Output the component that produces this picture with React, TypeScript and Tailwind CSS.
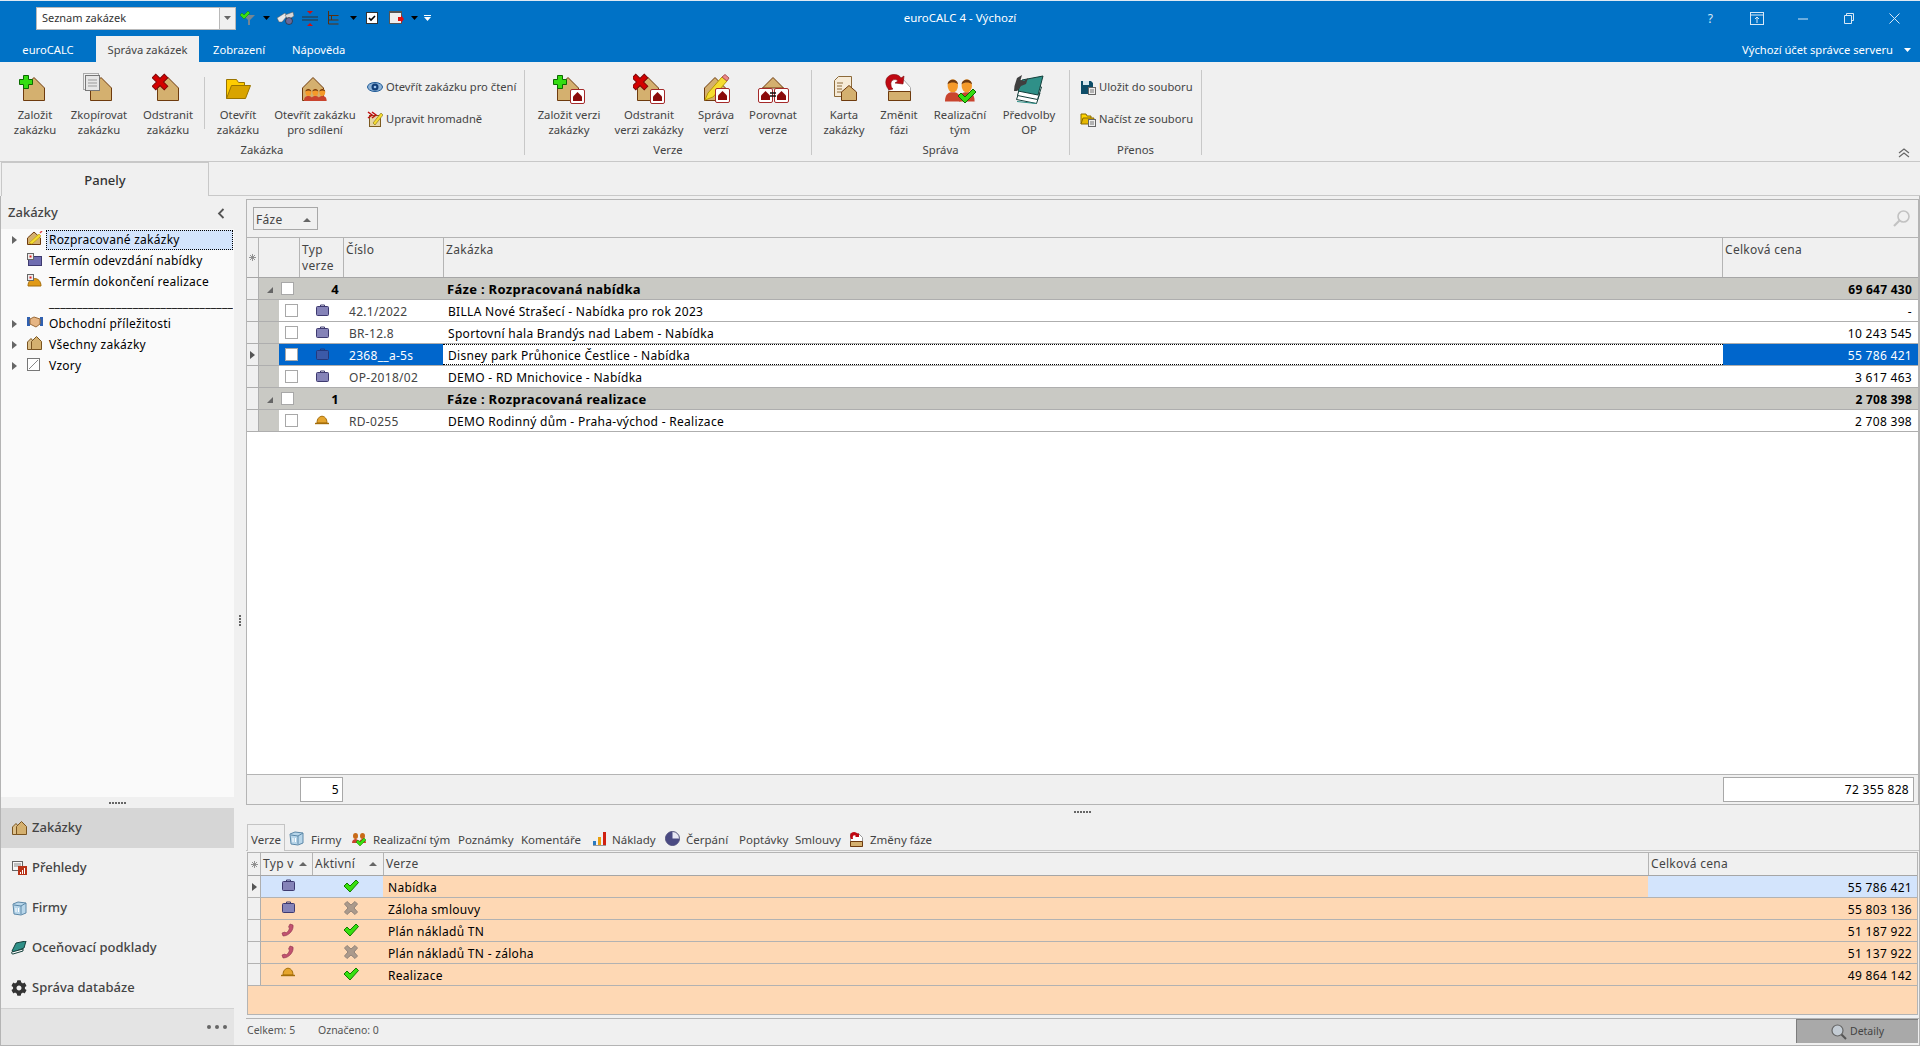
import React from "react";
import { FaCog } from "react-icons/fa";

const House = ({ x = 0, y = 0 }: { x?: number; y?: number }) => (
  <polygon transform={`translate(${x} ${y})`} points="0.5,23.5 0.5,11 11,0.5 21.5,11 21.5,23.5" fill="#d4b06f" stroke="#6e3b0e" />
);
const Plus = ({ x = 0, y = 0 }: { x?: number; y?: number }) => (
  <polygon transform={`translate(${x} ${y})`} points="4.5,0.5 9.5,0.5 9.5,4.5 13.5,4.5 13.5,9.5 9.5,9.5 9.5,13.5 4.5,13.5 4.5,9.5 0.5,9.5 0.5,4.5 4.5,4.5" fill="#35dd12" stroke="#0b6b00" />
);
const Cross = ({ x = 0, y = 0 }: { x?: number; y?: number }) => (
  <polygon transform={`translate(${x} ${y}) rotate(45 7 7)`} points="4.5,-1.5 9.5,-1.5 9.5,4.5 15.5,4.5 15.5,9.5 9.5,9.5 9.5,15.5 4.5,15.5 4.5,9.5 -1.5,9.5 -1.5,4.5 4.5,4.5" fill="#d40000" stroke="#7c0606" />
);
const Badge = ({ x = 0, y = 0 }: { x?: number; y?: number }) => (
  <g transform={`translate(${x} ${y})`}>
    <rect x="0.5" y="0.5" width="14" height="14" rx="1.5" fill="#fff" stroke="#a52a2a" />
    <polygon points="3,12 3,7.5 7.5,3 12,7.5 12,12" fill="#8b0a0a" />
  </g>
);
const Person = ({ x = 0, y = 0, s = 1 }: { x?: number; y?: number; s?: number }) => (
  <g transform={`translate(${x} ${y}) scale(${s})`}>
    <path d="M0 18 C0 12 3 11 6 11 C9 11 12 12 12 18 Z" fill="#c9442e" />
    <ellipse cx="6" cy="6" rx="4" ry="5" fill="#f59a2a" />
    <path d="M2 5 C2 0 10 0 10 5 C8 3 4 3 2 5Z" fill="#6e3a12" />
  </g>
);
const Ico = ({ s = 32, children }: { s?: number; children: React.ReactNode }) => (
  <svg width={s} height={s} viewBox={`0 0 ${s} ${s}`} className="block shrink-0">{children}</svg>
);

const ZalozitIcon = () => <Ico><House x={4} y={4} /><Plus x={0} y={2} /></Ico>;
const KopieIcon = () => (
  <Ico>
    <House x={7} y={4} />
    <rect x="0.5" y="0.5" width="15" height="16" fill="none" stroke="#666" strokeDasharray="1 1" />
    <rect x="2.5" y="2.5" width="14" height="15" fill="#e6e6e6" stroke="#777" />
    <path d="M5 7h9M5 10h9M5 13h9" stroke="#999" />
  </Ico>
);
const OdstranitIcon = () => <Ico><House x={5} y={4} /><Cross x={1} y={2} /></Ico>;
const SlozkaIcon = () => (
  <Ico>
    <path d="M4.5 25.5V6.5h10l2 3h6v4" fill="#ffcc00" stroke="#9a7400" />
    <path d="M4.5 25.5l5-13h19l-5 13z" fill="#d9a400" stroke="#9a7400" />
  </Ico>
);
const SdileniIcon = () => (
  <Ico>
    <House x={3} y={4} />
    <Person x={5} y={15} s={0.72} />
    <Person x={12} y={15} s={0.72} />
    <Person x={19} y={15} s={0.72} />
  </Ico>
);
const VerzePlus = () => <Ico><House x={4} y={4} /><Plus x={0} y={2} /><Badge x={17} y={16} /></Ico>;
const VerzeX = () => <Ico><House x={4} y={4} /><Cross x={0} y={2} /><Badge x={17} y={16} /></Ico>;
const VerzeSprava = () => (
  <Ico>
    <House x={4} y={4} />
    <path d="M5 27 L8 20 L22 4 L27 8 L13 24Z" fill="#f5dc30" stroke="#b89a00" />
    <path d="M22 4 L25 1.5 L29 5 L27 8Z" fill="#e88" stroke="#a55" />
    <Badge x={15} y={15} />
  </Ico>
);
const VerzePorovnat = () => (
  <Ico>
    <polygon points="5.5,15 16,4.5 26.5,15" fill="#d4b06f" stroke="#6e3b0e" />
    <Badge x={1} y={15} />
    <Badge x={17} y={15} />
    <path d="M13 20h6M13 23h6" stroke="#111" strokeWidth="1.5" />
  </Ico>
);
const KartaIcon = () => (
  <Ico>
    <path d="M6.5 7.5l4-4h13v20h-17z" fill="#f6ebd8" stroke="#8c6a3a" />
    <path d="M9 10h6M9 13h5M9 16h5M9 19h5" stroke="#8c6a3a" />
    <polygon points="13.5,27.5 13.5,19 21,12.5 28.5,19 28.5,27.5" fill="#d4b06f" stroke="#6e3b0e" />
  </Ico>
);
const ZmenitIcon = () => (
  <Ico>
    <path d="M5.5 27.5V5.5h14l8 9v13z" fill="#fff" stroke="#aaa" />
    <path d="M5.5 27.5v-9h22v9z" fill="#d4b06f" stroke="#6e3b0e" />
    <path d="M6 17 C0 10 3 2 10 1.5 C14 1 17 3 18 5 L21 3 L20 11 L12 10 L15 8 C12 5 7 7 8 12 C8 14 9 15 10 16Z" fill="#c00812" stroke="#7a0a0a" strokeWidth="0.6" />
  </Ico>
);
const TymIcon = () => (
  <Ico>
    <Person x={1} y={5} s={1.3} />
    <Person x={15} y={5} s={1.3} />
    <path d="M14 23l3-3 4 4 8-8 3 3-11 11z" fill="#35dd12" stroke="#0b6b00" />
  </Ico>
);
const KnihaIcon = () => (
  <Ico>
    <path d="M3.5 26.5L23.5 30.5L27 20L7 16Z" fill="#fff" stroke="#143f3b" />
    <path d="M4 28.5L23 30.5" stroke="#2f9088" />
    <path d="M4.5 22.5L24.5 26.5L28.5 14L8 10Z" fill="#fff" stroke="#143f3b" />
    <path d="M5 18L9 7L30 3L25 22Z" fill="#2f9088" stroke="#143f3b" />
    <path d="M1.5 13 L4 5 L9 2 L7.5 7 L11 8 L15 5 L13 11 L8 13 L4 18 L1 18Z" fill="#3f3f3f" />
  </Ico>
);
const EyeIcon = () => (
  <Ico s={16}>
    <ellipse cx="8" cy="8" rx="7.5" ry="4.5" fill="#8fb4d8" stroke="#1e5a96" />
    <circle cx="8" cy="8" r="3.5" fill="#123f78" />
    <circle cx="8" cy="8" r="1.3" fill="#9fc6ee" />
  </Ico>
);
const HromadneIcon = () => (
  <Ico s={16}>
    <rect x="2.5" y="4.5" width="11" height="11" fill="#e6d6a8" stroke="#7c5a20" />
    <path d="M1 1l4 3-4 3M5 1l4 3-4 3" stroke="#c01010" strokeWidth="1.5" fill="none" />
    <path d="M6 12L14 2l2 2-8 10z" fill="#f5dc30" stroke="#7c6a10" strokeWidth="0.6" />
  </Ico>
);
const UlozitIcon = () => (
  <Ico s={16}>
    <path d="M1 2h10l2 2v11H1z" fill="#0e4d68" />
    <rect x="3" y="2" width="6" height="4" fill="#d8e8ee" />
    <rect x="8.5" y="8.5" width="7" height="7" fill="#eee" stroke="#666" />
    <path d="M10 11h4M10 13h4" stroke="#777" />
  </Ico>
);
const NacistIcon = () => (
  <Ico s={16}>
    <path d="M1 13V3h5l1 2h4v2" fill="#ffd400" stroke="#8a6a00" />
    <path d="M1 13l2-6h11l-2 6z" fill="#e6b800" stroke="#8a6a00" />
    <rect x="8.5" y="8.5" width="7" height="7" fill="#eee" stroke="#666" />
    <path d="M10 11h4M10 13h4" stroke="#777" />
  </Ico>
);
const Caret = ({ c = "#000", className = "" }: { c?: string; className?: string }) => (
  <svg width="7" height="4" viewBox="0 0 7 4" className={`block shrink-0 ${className}`}><polygon points="0,0 7,0 3.5,4" fill={c} /></svg>
);
const CaseI = ({ dark = false }: { dark?: boolean }) => (
  <svg width="13" height="12" viewBox="0 0 13 12" className="block shrink-0">
    <path d="M4.5 3V1h4v2" fill="none" stroke={dark ? "#24397c" : "#3e3a70"} />
    <rect x="0.5" y="2.5" width="12" height="9" rx="1" fill={dark ? "#3c5aa8" : "#8583b8"} stroke={dark ? "#24397c" : "#3e3a70"} />
  </svg>
);
const HatI = () => (
  <svg width="14" height="10" viewBox="0 0 14 10" className="block shrink-0">
    <path d="M2 8 C2 -1 12 -1 12 8Z" fill="#e5a52e" stroke="#a46d0a" />
    <path d="M0 8.5h14" stroke="#a46d0a" strokeWidth="1.4" />
  </svg>
);
const PhoneI = () => (
  <svg width="14" height="14" viewBox="0 0 14 14" className="block shrink-0">
    <path d="M9 1 L12 2 C13 7 8 13 2 13 L1 10 L4 9 L5 10 C7 9 8 7 8.5 5 L7.5 4Z" fill="#c25270" stroke="#8c2f4c" strokeWidth="0.6" />
  </svg>
);
const CheckI = () => (
  <svg width="16" height="14" viewBox="0 0 16 14" className="block shrink-0">
    <path d="M1 7l3-3 3 3 6-6 2.5 2.5L7 13z" fill="#38e010" stroke="#127a00" />
  </svg>
);
const GrayX = () => (
  <svg width="14" height="14" viewBox="0 0 14 14" className="block shrink-0">
    <polygon points="3,0.5 7,4 11,0.5 13.5,3 10,7 13.5,11 11,13.5 7,10 3,13.5 0.5,11 4,7 0.5,3" fill="#ab9a8c" stroke="#93847a" />
  </svg>
);
const DoubleHouse = () => (
  <svg width="15" height="14" viewBox="0 0 15 14" className="block shrink-0">
    <polygon points="0.5,13.5 0.5,6 4,2.5 7,6 7,13.5" fill="#dcc08a" stroke="#7a5420" />
    <polygon points="4.5,13.5 4.5,5.5 9.5,0.5 14.5,5.5 14.5,13.5" fill="#d4b06f" stroke="#7a5420" />
  </svg>
);
const CubeI = () => (
  <svg width="15" height="15" viewBox="0 0 15 15" className="block shrink-0">
    <path d="M1 3l5-2 8 1v10l-5 2-7-1z" fill="#b8d6ea" stroke="#5c88a8" />
    <path d="M2 4l7 1v8M9 5l5-3" fill="none" stroke="#5c88a8" />
    <path d="M4 7v4M6.5 7v4" stroke="#fff" />
  </svg>
);
const BookI = () => (
  <svg width="16" height="15" viewBox="0 0 16 15" className="block shrink-0">
    <path d="M1 10L5 2l10-2-2 7L3 11z" fill="#2f9088" stroke="#143f3b" />
    <path d="M1 11l11-3v2L2 13c-2 0-2-2-1-2z" fill="#fff" stroke="#143f3b" />
  </svg>
);
const ReportI = () => (
  <svg width="15" height="14" viewBox="0 0 15 14" className="block shrink-0">
    <rect x="0.5" y="0.5" width="10" height="9" fill="#f6f6f6" stroke="#666" />
    <path d="M2 3h7M2 5h7" stroke="#888" />
    <rect x="6" y="5" width="9" height="9" fill="#b83216" />
    <path d="M8.5 13v-2M10.5 13V9M12.5 13V7" stroke="#fff" />
  </svg>
);
const PencilHouse = () => (
  <svg width="16" height="14" viewBox="0 0 16 14" className="block shrink-0">
    <polygon points="0.5,13.5 0.5,7 7,1 13.5,7 13.5,13.5" fill="#d4b06f" stroke="#6e3b0e" />
    <path d="M2 12L12 3l2 2-9 8z" fill="#f5dc30" stroke="#b89a00" strokeWidth="0.6" />
    <path d="M13 2l2-2" stroke="#d44" strokeWidth="1.5" />
  </svg>
);
const CaseTree = () => (
  <svg width="15" height="13" viewBox="0 0 15 13" className="block shrink-0">
    <rect x="1.5" y="3.5" width="13" height="9" fill="#6f6db0" stroke="#3e3a70" />
    <rect x="0.5" y="0.5" width="6" height="6" fill="#eee" stroke="#666" />
    <rect x="2.5" y="2.5" width="2" height="2" fill="#d22" />
  </svg>
);
const HatTree = () => (
  <svg width="15" height="13" viewBox="0 0 15 13" className="block shrink-0">
    <path d="M1 12 C1 2 14 2 14 12Z" fill="#e09a18" stroke="#a46d0a" />
    <rect x="0.5" y="0.5" width="6" height="6" fill="#eee" stroke="#666" />
    <rect x="2.5" y="2.5" width="2" height="2" fill="#d22" />
  </svg>
);
const ShakeI = () => (
  <svg width="16" height="12" viewBox="0 0 16 12" className="block shrink-0">
    <rect x="0" y="1" width="3" height="9" fill="#2f60b0" />
    <rect x="13" y="1" width="3" height="9" fill="#2f60b0" />
    <path d="M3 3l4-2 6 2v5l-4 3-6-3z" fill="#e6b583" stroke="#9a6a38" />
  </svg>
);
const EmptyBox = () => (
  <svg width="13" height="13" viewBox="0 0 13 13" className="block shrink-0">
    <rect x="0.5" y="0.5" width="12" height="12" fill="#fff" stroke="#777" />
    <path d="M2 11L11 2" stroke="#888" />
  </svg>
);
const RightTri = ({ c = "#555" }: { c?: string }) => (
  <svg width="5" height="8" viewBox="0 0 5 8" className="block shrink-0"><polygon points="0,0 5,4 0,8" fill={c} /></svg>
);
const UpTri = ({ className = "" }: { className?: string }) => (
  <svg width="8" height="4" viewBox="0 0 8 4" className={`block shrink-0 ${className}`}><polygon points="0,4 8,4 4,0" fill="#666" /></svg>
);
const Star = () => (
  <svg width="7" height="7" viewBox="0 0 7 7" className="block shrink-0">
    <path d="M3.5 0v7M0 3.5h7M1 1l5 5M6 1L1 6" stroke="#888" strokeWidth="0.9" />
  </svg>
);
const Dots = ({ n = 6, v = false, className = "" }: { n?: number; v?: boolean; className?: string }) => (
  <div className={`flex ${v ? "flex-col" : ""} gap-[1px] ${className}`}>
    {Array.from({ length: n }).map((_, i) => <span key={i} className="block w-[2px] h-[2px] bg-[#666]" />)}
  </div>
);

const Big = ({ w, icon, a, b }: { w: string; icon: React.ReactNode; a: string; b: string }) => (
  <div className={`${w} flex flex-col items-center shrink-0`}>
    <div className="h-[32px] mt-[11px] mb-[2px] flex justify-center">{icon}</div>
    <div className="text-center leading-[15px] whitespace-nowrap">{a}<br />{b}</div>
  </div>
);
const Small = ({ icon, t }: { icon: React.ReactNode; t: string }) => (
  <div className="flex items-center gap-[3px] h-[16px] whitespace-nowrap text-[11.2px]">{icon}<span>{t}</span></div>
);
const Group = ({ w, label, children }: { w: string; label: string; children: React.ReactNode }) => (
  <div className={`${w} shrink-0 flex flex-col h-full`}>
    <div className="flex flex-1">{children}</div>
    <div className="text-center leading-[15px] h-[19px]">{label}</div>
  </div>
);
const Sep = () => <div className="w-[1px] h-[85px] mt-[8px] bg-[#c8c8c8] shrink-0" />;

const Check = ({ className = "" }: { className?: string }) => (
  <span className={`block w-[13px] h-[13px] bg-white border border-[#a8a8a8] shrink-0 ${className}`} />
);

const GroupRow = ({ n, t, p }: { n: string; t: string; p: string }) => (
  <div className="flex h-[22px] border-b border-[#aeaeae]">
    <div className="w-[12px] bg-[#f0f0f0] border-r border-[#aeaeae] shrink-0" />
    <div className="flex flex-1 items-center bg-[#c9c9c4] font-bold text-black">
      <div className="w-[22px] flex justify-center shrink-0">
        <svg width="6" height="6" viewBox="0 0 6 6" className="block mt-[3px]"><polygon points="0,6 6,6 6,0" fill="#666" /></svg>
      </div>
      <Check />
      <div className="w-[47px] text-right pr-[2px] pt-[2px] shrink-0 text-[13px]">{n}</div>
      <div className="pl-[106px] pt-[2px] flex-1 text-[13px] tracking-[0.3px]">{t}</div>
      <div className="pr-[6px] pt-[2px] tracking-[0.25px]">{p}</div>
    </div>
  </div>
);
const DataRow = ({ no, t, p, sel = false, hat = false }: { no: string; t: string; p: string; sel?: boolean; hat?: boolean }) => (
  <div className="flex h-[22px] border-b border-[#aeaeae]">
    <div className="w-[12px] bg-[#f0f0f0] border-r border-[#aeaeae] shrink-0 flex items-center justify-center">
      {sel && <RightTri />}
    </div>
    <div className="w-[20px] bg-[#c9c9c4] shrink-0" />
    <div className={`w-[164px] shrink-0 flex items-center ${sel ? "bg-[#0066cc] text-white" : "bg-white"}`}>
      <Check className="ml-[6px]" />
      <div className="w-[38px] flex justify-center shrink-0 -mt-[2px] pl-[10px]">{hat ? <HatI /> : <CaseI dark={sel} />}</div>
      <div className="pl-[13px] pt-[2px]">{no}</div>
    </div>
    <div className={`flex-1 flex items-center bg-white text-black pl-[5px] pt-[2px] ${sel ? "border-y border-dotted border-black" : ""}`}>{t}</div>
    <div className={`w-[195px] shrink-0 flex items-center justify-end pr-[6px] pt-[2px] ${sel ? "bg-[#0066cc] text-white" : "bg-white text-black"}`}>{p}</div>
  </div>
);

const LowerRow = ({ typ, ok, t, p, sel = false }: { typ: React.ReactNode; ok: boolean; t: string; p: string; sel?: boolean }) => (
  <div className="flex h-[22px] border-b border-[#b2b2b2] bg-[#fed8b4] text-black">
    <div className="w-[13px] shrink-0 bg-[#f0f0f0] border-r border-[#aeaeae] flex items-center justify-center">
      {sel && <RightTri />}
    </div>
    <div className={`w-[122px] shrink-0 flex ${sel ? "bg-[#d3e4fc]" : ""}`}>
      <div className="w-[51px] flex justify-center pl-[3px] pt-[3px] shrink-0">{typ}</div>
      <div className="w-[71px] flex justify-center pl-[6px] pt-[3px] shrink-0">{ok ? <CheckI /> : <GrayX />}</div>
    </div>
    <div className="flex-1 flex items-center pl-[5px] pt-[2px]">{t}</div>
    <div className={`w-[269px] shrink-0 flex items-center justify-end pr-[5px] pt-[2px] ${sel ? "bg-[#d3e4fc]" : ""}`}>{p}</div>
  </div>
);

const TreeRow = ({ exp = false, icon, t, sel = false }: { exp?: boolean; icon?: React.ReactNode; t: string; sel?: boolean }) => (
  <div className="flex items-center h-[21px]">
    <div className="w-[26px] flex justify-center shrink-0">{exp && <RightTri c="#666" />}</div>
    <div className="w-[19px] shrink-0 -mt-[3px]">{icon}</div>
    <div className={`flex-1 h-[20px] flex items-center mr-[1px] whitespace-nowrap overflow-hidden text-black tracking-[0.25px] ${sel ? "bg-[#d3e4fc] border border-dotted border-black pl-[2px]" : "pl-[3px]"}`}>{t}</div>
  </div>
);
const Nav = ({ icon, t, sel = false }: { icon: React.ReactNode; t: string; sel?: boolean }) => (
  <div className={`h-[40px] flex items-center text-[13px] font-medium text-[#444] ${sel ? "bg-[#d6d6d6]" : ""}`}>
    <div className="w-[30px] flex justify-end pr-[4px] shrink-0">{icon}</div>
    <span className="pl-[1px]">{t}</span>
  </div>
);
const LTab = ({ w, icon, t, sp }: { w: string; icon?: React.ReactNode; t: string; sp?: string }) => (
  <div className={`${w} shrink-0 flex items-center whitespace-nowrap text-[#444] ${sp ?? ""}`}>
    {icon}
    <span className="pt-[2px]">{t}</span>
  </div>
);

export default function App() {
  return (
    <div className="w-[1920px] h-[1046px] overflow-hidden flex flex-col bg-[#f0f0f0] font-['Noto_Sans',sans-serif] text-[#444] text-[12px] border-t border-[#dfe9f3]">
      {/* title */}
      <div className="h-[61px] shrink-0 bg-[#0072c6] text-white flex flex-col">
        <div className="h-[35px] grid grid-cols-[1fr_auto_1fr] items-center">
          <div className="flex items-center pl-[36px] -mt-[1px]">
            <div className="w-[200px] h-[23px] flex bg-white border border-[#b9b9b9]">
              <div className="flex-1 text-[#333] text-[11px] flex items-center pl-[5px]">Seznam zakázek</div>
              <div className="w-[16px] bg-[#f0f0f0] border-l border-[#b9b9b9] flex items-center justify-center"><Caret c="#666" /></div>
            </div>
            <svg width="15" height="14" viewBox="0 0 15 14" className="block ml-[4px]">
              <path d="M3 4h12l-5 5v5H8V9z" fill="#8a8a8a" opacity="0.85" />
              <path d="M0 4l2-2 2 2 4-4 2 2-6 6z" fill="#38e010" stroke="#127a00" strokeWidth="0.5" />
            </svg>
            <Caret className="ml-[8px]" />
            <svg width="17" height="14" viewBox="0 0 17 14" className="block ml-[7px]">
              <path d="M0 7l8-5 2 3-5 6H2z" fill="#e8e8e8" stroke="#555" strokeWidth="0.5" />
              <path d="M8 4l8-3 1 4-6 4z" fill="#d8d8d8" stroke="#555" strokeWidth="0.5" />
              <circle cx="12" cy="10" r="3.5" fill="#6a6a9a" stroke="#222" strokeWidth="0.6" />
            </svg>
            <svg width="16" height="15" viewBox="0 0 16 15" className="block ml-[8px]">
              <path d="M0 6h16M0 9h16" stroke="#333" />
              <polygon points="5,0 11,0 8,3" fill="#d01010" />
              <polygon points="5,15 11,15 8,12" fill="#d01010" />
            </svg>
            <svg width="11" height="14" viewBox="0 0 11 14" className="block ml-[10px]">
              <path d="M0.5 0v13h10M0.5 4.5h10M0.5 9h10M3.5 4.5v4.5" stroke="#5a3010" fill="none" />
            </svg>
            <Caret className="ml-[11px]" />
            <svg width="12" height="12" viewBox="0 0 12 12" className="block ml-[9px]">
              <rect x="0.5" y="0.5" width="11" height="11" fill="#fff" stroke="#333" />
              <path d="M3 6l2 2 4-4" stroke="#000" strokeWidth="1.6" fill="none" />
            </svg>
            <svg width="15" height="14" viewBox="0 0 15 14" className="block ml-[11px]">
              <rect x="0.5" y="0.5" width="12" height="12" fill="#eee" stroke="#555" />
              <rect x="0" y="0" width="13" height="2" fill="#555" />
              <polygon points="9,6 12,6 12,4 15,8 12,12 12,10 9,10" fill="#e01010" />
            </svg>
            <Caret className="ml-[7px]" />
            <svg width="7" height="6" viewBox="0 0 7 6" className="block ml-[6px]">
              <path d="M0 0.5h7" stroke="#fff" /><polygon points="0,2 7,2 3.5,6" fill="#fff" />
            </svg>
          </div>
          <div className="text-[11.5px] -mt-[1px]">euroCALC 4 - Výchozí</div>
          <div className="flex items-center justify-end pr-[20px] text-[#d8e8f6]">
            <span className="text-[12px] mr-[37px]">?</span>
            <svg width="14" height="13" viewBox="0 0 14 13" className="block mr-[34px]">
              <rect x="0.5" y="0.5" width="13" height="12" fill="none" stroke="#d8e8f6" />
              <path d="M0.5 3h13M7 11V5M5 7l2-2 2 2" stroke="#d8e8f6" fill="none" />
            </svg>
            <svg width="10" height="2" viewBox="0 0 10 2" className="block mr-[36px]"><path d="M0 1h10" stroke="#d8e8f6" /></svg>
            <svg width="10" height="11" viewBox="0 0 10 11" className="block mr-[35px]">
              <path d="M2.5 2.5v-2h7v7h-2M0.5 2.5h7v8h-7z" fill="none" stroke="#d8e8f6" />
            </svg>
            <svg width="11" height="11" viewBox="0 0 11 11" className="block"><path d="M0.5 0.5l10 10M10.5 0.5l-10 10" stroke="#d8e8f6" /></svg>
          </div>
        </div>
        <div className="h-[26px] flex items-stretch text-[11.2px] pt-0">
          <div className="w-[96px] flex items-center justify-center shrink-0 pt-[2px]">euroCALC</div>
          <div className="w-[103px] flex items-center justify-center bg-[#f0f0f0] text-[#444] shrink-0 pt-[2px]">Správa zakázek</div>
          <div className="w-[93px] flex items-center justify-start shrink-0 pl-[14px] pt-[2px]">Zobrazení</div>
          <div className="flex items-center shrink-0 pt-[2px]">Nápověda</div>
          <div className="flex-1 flex items-center justify-end pr-[9px] gap-[11px] pt-[2px]">
            <span>Výchozí účet správce serveru</span>
            <Caret c="#fff" />
          </div>
        </div>
      </div>

      {/* ribbon */}
      <div className="h-[100px] shrink-0 flex items-start relative border-b border-[#c8c8c8] text-[11.3px] text-[#444]">
        <Group w="w-[524px]" label="Zakázka">
          <div className="w-[6px]" />
          <Big w="w-[58px]" icon={<ZalozitIcon />} a="Založit" b="zakázku" />
          <Big w="w-[70px]" icon={<KopieIcon />} a="Zkopírovat" b="zakázku" />
          <Big w="w-[68px]" icon={<OdstranitIcon />} a="Odstranit" b="zakázku" />
          <div className="w-[1px] h-[52px] mt-[15px] bg-[#c8c8c8] ml-[2px] mr-[1px]" />
          <Big w="w-[64px]" icon={<SlozkaIcon />} a="Otevřít" b="zakázku" />
          <Big w="w-[90px]" icon={<SdileniIcon />} a="Otevřít zakázku" b="pro sdílení" />
          <div className="ml-[7px] flex flex-col gap-[16px] mt-[17px]">
            <Small icon={<EyeIcon />} t="Otevřít zakázku pro čtení" />
            <Small icon={<HromadneIcon />} t="Upravit hromadně" />
          </div>
        </Group>
        <Sep />
        <Group w="w-[286px]" label="Verze">
          <div className="w-[8px]" />
          <Big w="w-[72px]" icon={<VerzePlus />} a="Založit verzi" b="zakázky" />
          <Big w="w-[88px]" icon={<VerzeX />} a="Odstranit" b="verzi zakázky" />
          <Big w="w-[46px]" icon={<VerzeSprava />} a="Správa" b="verzí" />
          <Big w="w-[68px]" icon={<VerzePorovnat />} a="Porovnat" b="verze" />
        </Group>
        <Sep />
        <Group w="w-[257px]" label="Správa">
          <div className="w-[8px]" />
          <Big w="w-[48px]" icon={<KartaIcon />} a="Karta" b="zakázky" />
          <Big w="w-[62px]" icon={<ZmenitIcon />} a="Změnit" b="fázi" />
          <Big w="w-[60px]" icon={<TymIcon />} a="Realizační" b="tým" />
          <Big w="w-[78px]" icon={<KnihaIcon />} a="Předvolby" b="OP" />
        </Group>
        <Sep />
        <Group w="w-[131px]" label="Přenos">
          <div className="ml-[10px] flex flex-col gap-[16px] mt-[17px]">
            <Small icon={<UlozitIcon />} t="Uložit do souboru" />
            <Small icon={<NacistIcon />} t="Načíst ze souboru" />
          </div>
        </Group>
        <Sep />
        <svg width="12" height="10" viewBox="0 0 12 10" className="absolute right-[10px] bottom-[3px]">
          <path d="M1 5l5-4 5 4M1 9l5-4 5 4" fill="none" stroke="#666" strokeWidth="1.2" />
        </svg>
      </div>

      {/* panel tab strip */}
      <div className="h-[34px] shrink-0 flex">
        <div className="w-[208px] ml-[1px] border-x border-t border-[#c8c8c8] flex items-center justify-center text-[13px] font-medium text-[#333] pt-[3px]">Panely</div>
        <div className="flex-1 border-b border-[#c8c8c8]" />
      </div>

      <div className="flex-1 flex min-h-0 border-x border-b border-[#b4b4b4]">
        {/* sidebar */}
        <div className="w-[233px] shrink-0 flex flex-col">
          <div className="h-[33px] shrink-0 flex items-center justify-between pl-[7px] pr-[6px] pt-[1px] text-[13px] font-medium text-[#444]">
            Zakázky
            <svg width="8" height="11" viewBox="0 0 8 11" className="block mr-[3px]"><path d="M6.5 1L2 5.5 6.5 10" fill="none" stroke="#555" strokeWidth="1.8" /></svg>
          </div>
          <div className="flex-1 bg-[#fafafa] text-[12px]">
            <TreeRow exp sel icon={<PencilHouse />} t="Rozpracované zakázky" />
            <TreeRow icon={<CaseTree />} t="Termín odevzdání nabídky" />
            <TreeRow icon={<HatTree />} t="Termín dokončení realizace" />
            <TreeRow t="_________________________________" />
            <TreeRow exp icon={<ShakeI />} t="Obchodní příležitosti" />
            <TreeRow exp icon={<DoubleHouse />} t="Všechny zakázky" />
            <TreeRow exp icon={<EmptyBox />} t="Vzory" />
          </div>
          <div className="h-[11px] shrink-0 flex justify-center items-center"><Dots n={6} /></div>
          <Nav sel icon={<DoubleHouse />} t="Zakázky" />
          <Nav icon={<ReportI />} t="Přehledy" />
          <Nav icon={<CubeI />} t="Firmy" />
          <Nav icon={<BookI />} t="Oceňovací podklady" />
          <Nav icon={<FaCog className="text-[#333] text-[16px]" />} t="Správa databáze" />
          <div className="h-[37px] shrink-0 bg-[#e4e4e4] border-t border-[#d2d2d2] flex items-center justify-end pr-[7px] gap-[4px]">
            <span className="w-[4px] h-[4px] rounded-full bg-[#666]" />
            <span className="w-[4px] h-[4px] rounded-full bg-[#666]" />
            <span className="w-[4px] h-[4px] rounded-full bg-[#666]" />
          </div>
        </div>
        <div className="w-[12px] shrink-0 flex items-center justify-center pr-[1px]"><Dots n={4} v /></div>

        {/* main */}
        <div className="flex-1 min-w-0 flex flex-col">
          <div className="h-[606px] mt-[3px] shrink-0 flex flex-col border border-[#b4b4b4] tracking-[0.3px]">
            <div className="h-[38px] shrink-0 flex items-center justify-between border-b border-[#b4b4b4] pl-[6px] pr-[8px]">
              <div className="w-[65px] h-[23px] border border-[#a8a8a8] flex items-center justify-between pl-[2px] pr-[6px] pt-[3px]">
                Fáze
                <UpTri />
              </div>
              <svg width="17" height="17" viewBox="0 0 17 17" className="block">
                <circle cx="10.5" cy="6.5" r="5.5" fill="none" stroke="#c2c2c2" strokeWidth="1.6" />
                <path d="M6.5 10.5L1 16" stroke="#c2c2c2" strokeWidth="2.2" />
              </svg>
            </div>
            <div className="h-[40px] shrink-0 flex border-b border-[#a6a6a6] text-[#444]">
              <div className="w-[12px] shrink-0 border-r border-[#b4b4b4] flex items-center justify-center"><Star /></div>
              <div className="w-[41px] shrink-0 border-r border-[#b4b4b4]" />
              <div className="w-[44px] shrink-0 border-r border-[#b4b4b4] pl-[2px] pt-[4px] leading-[16px]">Typ<br />verze</div>
              <div className="w-[100px] shrink-0 border-r border-[#b4b4b4] pl-[2px] pt-[4px] leading-[16px]">Číslo</div>
              <div className="flex-1 pl-[2px] pt-[4px] border-r border-[#b4b4b4] leading-[16px]">Zakázka</div>
              <div className="w-[195px] shrink-0 pl-[2px] pt-[4px] leading-[16px]">Celková cena</div>
            </div>
            <div className="flex-1 bg-white min-h-0">
              <GroupRow n="4" t="Fáze : Rozpracovaná nabídka" p="69 647 430" />
              <DataRow no="42.1/2022" t="BILLA Nové Strašecí - Nabídka pro rok 2023" p="-" />
              <DataRow no="BR-12.8" t="Sportovní hala Brandýs nad Labem - Nabídka" p="10 243 545" />
              <DataRow sel no="2368__a-5s" t="Disney park Průhonice Čestlice - Nabídka" p="55 786 421" />
              <DataRow no="OP-2018/02" t="DEMO - RD Mnichovice - Nabídka" p="3 617 463" />
              <GroupRow n="1" t="Fáze : Rozpracovaná realizace" p="2 708 398" />
              <DataRow hat no="RD-0255" t="DEMO Rodinný dům - Praha-východ - Realizace" p="2 708 398" />
            </div>
            <div className="h-[30px] shrink-0 border-t border-[#b4b4b4] flex items-center justify-between pl-[53px] pr-[4px]">
              <div className="w-[43px] h-[25px] bg-white border border-[#a8a8a8] flex items-center justify-end pr-[3px] text-black">5</div>
              <div className="w-[191px] h-[25px] bg-white border border-[#a8a8a8] flex items-center justify-end pr-[4px] text-black">72 355 828</div>
            </div>
          </div>
          <div className="h-[17px] shrink-0 flex items-center justify-center pb-[4px]"><Dots n={6} /></div>

          {/* lower tabs */}
          <div className="h-[29px] shrink-0 flex items-end border-b border-[#c4c4c4] pl-[1px] text-[11.5px]">
            <div className="w-[38px] h-[27px] shrink-0 border-x border-t border-[#c4c4c4] flex items-center justify-center -mb-[1px] bg-[#f0f0f0] pt-[4px]">Verze</div>
            <div className="flex h-[26px] items-center pt-[3px]">
              <LTab w="w-[67px]" sp="pl-[4px] gap-[7px]" icon={<CubeI />} t="Firmy" />
              <LTab w="w-[106px]" sp="gap-[6px]" icon={<TymSmall />} t="Realizační tým" />
              <LTab w="w-[63px]" t="Poznámky" />
              <LTab w="w-[72px]" t="Komentáře" />
              <LTab w="w-[72px]" sp="gap-[6px]" icon={<BarsI />} t="Náklady" />
              <LTab w="w-[74px]" sp="gap-[6px]" icon={<PieI />} t="Čerpání" />
              <LTab w="w-[56px]" t="Poptávky" />
              <LTab w="w-[54px]" t="Smlouvy" />
              <LTab w="w-[84px]" sp="gap-[6px]" icon={<FazeSmall />} t="Změny fáze" />
            </div>
          </div>
          <div className="h-[163px] shrink-0 mt-[1px] mx-[1px] flex flex-col border border-[#b4b4b4] bg-[#fed8b4] tracking-[0.3px]">
            <div className="h-[23px] shrink-0 bg-[#f0f0f0] flex border-b border-[#a6a6a6] text-[#444]">
              <div className="w-[13px] shrink-0 border-r border-[#b4b4b4] flex items-center justify-center"><Star /></div>
              <div className="w-[52px] shrink-0 border-r border-[#b4b4b4] flex items-center justify-between pl-[2px] pr-[5px] overflow-hidden">Typ v<UpTri /></div>
              <div className="w-[71px] shrink-0 border-r border-[#b4b4b4] flex items-center justify-between pl-[2px] pr-[6px]">Aktivní<UpTri /></div>
              <div className="flex-1 border-r border-[#b4b4b4] flex items-center pl-[2px]">Verze</div>
              <div className="w-[268px] shrink-0 flex items-center pl-[2px]">Celková cena</div>
            </div>
            <LowerRow sel typ={<CaseI />} ok t="Nabídka" p="55 786 421" />
            <LowerRow typ={<CaseI />} ok={false} t="Záloha smlouvy" p="55 803 136" />
            <LowerRow typ={<PhoneI />} ok t="Plán nákladů TN" p="51 187 922" />
            <LowerRow typ={<PhoneI />} ok={false} t="Plán nákladů TN - záloha" p="51 137 922" />
            <LowerRow typ={<HatI />} ok t="Realizace" p="49 864 142" />
          </div>
          <div className="flex-1 mt-[3px] border-t border-[#b4b4b4] flex items-start justify-between pr-[1px] text-[10.5px] text-[#555] min-h-0">
            <div className="flex h-[24px] items-center pl-[1px]">
              <span className="w-[71px]">Celkem: 5</span>
              <span>Označeno: 0</span>
            </div>
            <div className="w-[122px] h-[24px] bg-[#a9a9a9] border-l border-t border-[#7c7c7c] flex items-center justify-center gap-[3px] text-[#444]">
              <svg width="16" height="16" viewBox="0 0 16 16" className="block">
                <circle cx="6.5" cy="6.5" r="5.5" fill="#c4ccd4" stroke="#666" strokeWidth="1.2" />
                <path d="M10.5 10.5L15 15" stroke="#555" strokeWidth="2" />
              </svg>
              Detaily
            </div>
          </div>
        </div>
      </div>
    </div>
  );
}

function TymSmall() {
  return (
    <svg width="15" height="15" viewBox="0 0 15 15" className="block shrink-0">
      <path d="M0 12c0-3 2-4 3.5-4S7 9 7 12z" fill="#c9442e" />
      <path d="M7 12c0-3 2-4 3.5-4S14 9 14 12z" fill="#c9442e" />
      <ellipse cx="3.5" cy="5" rx="2.5" ry="3" fill="#c86a18" />
      <ellipse cx="10.5" cy="5" rx="2.5" ry="3" fill="#c86a18" />
      <path d="M4 11l2-2 2 2 4-4 2 2-6 6z" fill="#38e010" stroke="#127a00" strokeWidth="0.5" />
    </svg>
  );
}
function BarsI() {
  return (
    <svg width="13" height="15" viewBox="0 0 13 15" className="block shrink-0">
      <rect x="0" y="10" width="3" height="4" fill="#2a7ac0" />
      <rect x="5" y="6" width="3" height="8" fill="#e8a010" />
      <rect x="10" y="1" width="3" height="13" fill="#d02010" />
      <path d="M0 14.5h13" stroke="#999" />
    </svg>
  );
}
function PieI() {
  return (
    <svg width="15" height="15" viewBox="0 0 15 15" className="block shrink-0">
      <circle cx="7.5" cy="7.5" r="7" fill="#e8e8f4" stroke="#55557a" />
      <path d="M7.5 7.5V0.5A7 7 0 1 0 14.5 7.5Z" fill="#4a4a82" />
    </svg>
  );
}
function FazeSmall() {
  return (
    <svg width="15" height="16" viewBox="0 0 15 16" className="block shrink-0">
      <path d="M1.5 15.5V2.5h8l4 4v9z" fill="#fff" stroke="#999" />
      <path d="M1.5 15.5v-5h12v5z" fill="#d4b06f" stroke="#6e3b0e" />
      <path d="M2 8C0 4 2 1 5 1c2 0 3 1 4 2l1-1v4H6l1-1C5 3 3 5 4 8z" fill="#c00812" />
    </svg>
  );
}
